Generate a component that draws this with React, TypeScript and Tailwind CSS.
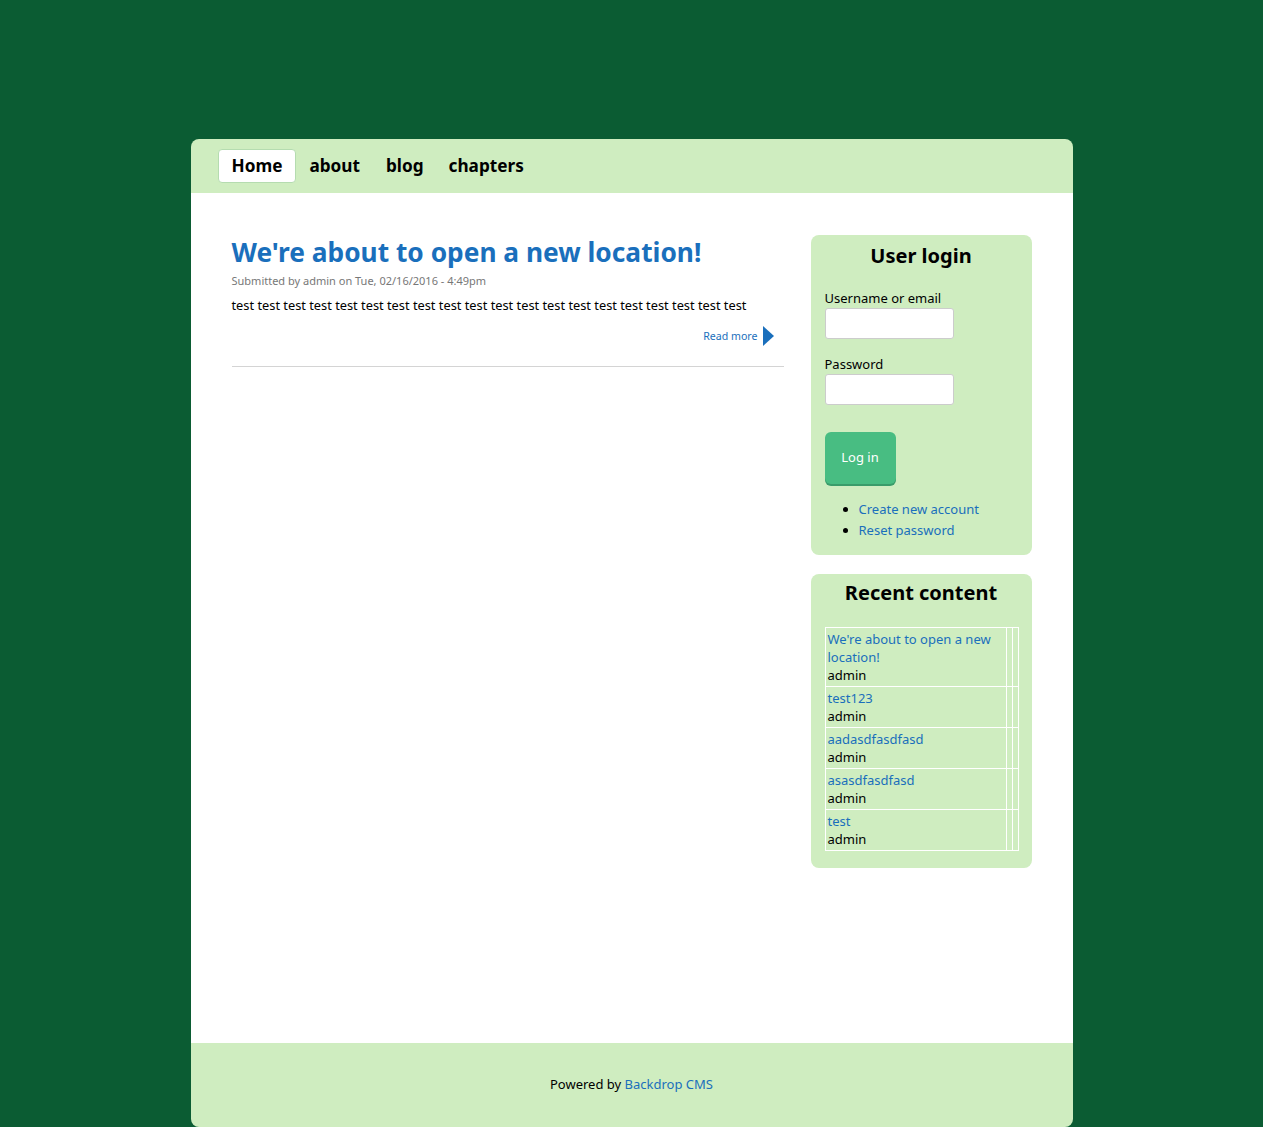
import React from "react";

const font = { fontFamily: '"Noto Sans", "Open Sans", sans-serif' };

export default function App() {
  const recent = [
    "We're about to open a new location!",
    "test123",
    "aadasdfasdfasd",
    "asasdfasdfasd",
    "test",
  ];
  return (
    <div className="min-h-[1127px] bg-[#0b5c33] pt-[139px]" style={font}>
      <div className="mx-auto w-[882px] overflow-hidden rounded-t-lg">
        <nav className="flex h-[54px] items-center bg-[#cfedc0] px-[27px]">
          <a className="rounded-[4px] border border-[#b5dcb0] bg-white px-[13px] py-[3px] text-[17.2px] font-bold leading-[26px] text-black">
            Home
          </a>
          <a className="pl-[13px] pr-[13px] text-[17.2px] font-bold leading-[26px] text-black">about</a>
          <a className="px-[13px] text-[17.2px] font-bold leading-[26px] text-black">blog</a>
          <a className="px-[12px] text-[17.2px] font-bold leading-[26px] text-black">chapters</a>
        </nav>
        <main className="flex h-[850px] gap-[27px] bg-white pl-[41px] pr-[40px] pt-[42px]">
          <div className="w-[552px]">
            <h2 className="text-[26.3px] font-bold leading-[34px] text-[#1a6fbc]">
              We're about to open a new location!
            </h2>
            <p className="mt-[4px] text-[11px] leading-[16px] text-[#777]">
              Submitted by admin on Tue, 02/16/2016 - 4:49pm
            </p>
            <p className="mt-[6px] text-[12.8px] leading-[20px] text-black">
              test test test test test test test test test test test test test test test test test test test test
            </p>
            <div className="mt-[11px] flex items-center justify-end pr-[10px]">
              <a className="text-[10.6px] leading-[16px] text-[#1a6fbc]">Read more</a>
              <svg width="11" height="20" viewBox="0 0 11 20" className="ml-[5px]">
                <path d="M0 0 L11 10 L0 20 Z" fill="#1a6fbc" />
              </svg>
            </div>
            <div className="mt-[20px] border-t border-[#d4d4d4]" />
          </div>
          <aside className="flex w-[221px] flex-col gap-[19px]">
            <section className="rounded-lg bg-[#cfedc0] px-[14px] pb-[14px] pt-[6px]">
              <h2 className="text-center text-[20px] font-bold leading-[30px] text-black">User login</h2>
              <label className="mt-[18px] block text-[13px] leading-[18px] text-black">Username or email</label>
              <div className="mt-[1px] h-[31px] w-[129px] rounded-[3px] border border-[#ccc] bg-white" />
              <label className="mt-[16px] block text-[13px] leading-[18px] text-black">Password</label>
              <div className="mt-[1px] h-[31px] w-[129px] rounded-[3px] border border-[#ccc] bg-white" />
              <button className="mt-[27px] block h-[52px] w-[71px] rounded-[6px] bg-[#48bd82] text-[13px] text-white shadow-[0_2px_0_#3a9c6a]">
                Log in
              </button>
              <ul className="mt-[15px] list-disc pl-[34px] text-[13px] leading-[21px] text-[#1a6fbc] marker:text-black">
                <li>Create new account</li>
                <li>Reset password</li>
              </ul>
            </section>
            <section className="rounded-lg bg-[#cfedc0] px-[14px] pb-[17px] pt-[4px]">
              <h2 className="text-center text-[20px] font-bold leading-[30px] text-black">Recent content</h2>
              <table className="mt-[19px] w-[194px] border-collapse">
                <tbody>
                  {recent.map((t) => (
                    <tr key={t}>
                      <td className="border border-white px-[2px] py-[2px] align-top text-[13px] leading-[18px]">
                        <a className="block text-[#1a6fbc]">{t}</a>
                        <span className="block text-black">admin</span>
                      </td>
                      <td className="w-[6px] border border-white" />
                      <td className="w-[6px] border border-white" />
                    </tr>
                  ))}
                </tbody>
              </table>
            </section>
          </aside>
        </main>
        <footer className="flex h-[84px] items-center justify-center rounded-b-lg bg-[#cfedc0] text-[13px] text-black">
          <span>
            Powered by <a className="text-[#1a6fbc]">Backdrop CMS</a>
          </span>
        </footer>
      </div>
    </div>
  );
}
